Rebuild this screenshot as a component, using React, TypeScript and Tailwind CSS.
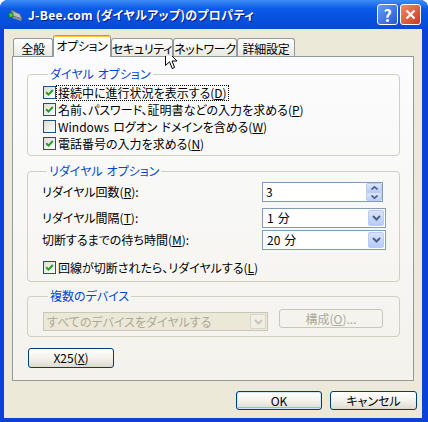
import React from "react";

const jp = "font-['Noto_Sans_CJK_JP','Noto_Sans',sans-serif] [font-feature-settings:'palt']";

function Box({ checked }: { checked: boolean }) {
  return (
    <span className="flex h-[13px] w-[13px] shrink-0 items-center justify-center border border-[#1c5180] bg-linear-to-br from-[#dcdcd7] to-white">
      {checked && (
        <svg width="9" height="9" viewBox="0 0 9 9">
          <path d="M1.2 4.2 L3.5 6.6 L7.8 2" stroke="#21a121" strokeWidth="2" fill="none" />
        </svg>
      )}
    </span>
  );
}

function CheckRow({ checked, focus, children }: { checked: boolean; focus?: boolean; children: React.ReactNode }) {
  return (
    <div className="flex h-[17px] items-center">
      <Box checked={checked} />
      <span
        className={
          focus
            ? "ml-[1px] whitespace-nowrap px-[1px] leading-[14px] outline outline-1 outline-dotted outline-black"
            : "ml-[1px] whitespace-nowrap px-[1px] leading-[14px]"
        }
      >
        {children}
      </span>
    </div>
  );
}

function Key({ k }: { k: string }) {
  return (
    <>
      (<span className="underline underline-offset-[1px]">{k}</span>)
    </>
  );
}

function Gap() {
  return <span className="inline-block w-[4px]" />;
}

function Chevron({ color = "#4d6185" }: { color?: string }) {
  return (
    <svg width="9" height="6" viewBox="0 0 9 6">
      <path d="M1 1 L4.5 4.5 L8 1" stroke={color} strokeWidth="2" fill="none" />
    </svg>
  );
}

function Combo({ num }: { num: string }) {
  return (
    <div className="flex h-[20px] w-[124px] items-center border border-[#7f9db9] bg-white">
      <span className="flex-1 pl-[4px] leading-[14px]">
        {num}
        <Gap />分
      </span>
      <span className="mr-[1px] flex h-[16px] w-[16px] items-center justify-center rounded-[2px] border border-[#b9cbf3] bg-linear-to-b from-[#d8e4fd] to-[#b7cbf8]">
        <Chevron />
      </span>
    </div>
  );
}

function Spin({ value }: { value: string }) {
  return (
    <div className="flex h-[20px] w-[121px] items-center border border-[#7f9db9] bg-white">
      <span className="flex-1 pl-[3px] leading-[14px]">{value}</span>
      <span className="flex h-[18px] w-[16px] flex-col">
        <span className="flex h-[9px] items-center justify-center rounded-t-[2px] border border-[#b9cbf3] bg-linear-to-b from-[#dbe6fd] to-[#bccef8]">
          <svg width="7" height="4" viewBox="0 0 7 4">
            <path d="M0.5 3.5 L3.5 0.8 L6.5 3.5" stroke="#4d6185" strokeWidth="1.6" fill="none" />
          </svg>
        </span>
        <span className="flex h-[9px] items-center justify-center rounded-b-[2px] border border-[#b9cbf3] bg-linear-to-b from-[#dbe6fd] to-[#bccef8]">
          <svg width="7" height="4" viewBox="0 0 7 4">
            <path d="M0.5 0.5 L3.5 3.2 L6.5 0.5" stroke="#4d6185" strokeWidth="1.6" fill="none" />
          </svg>
        </span>
      </span>
    </div>
  );
}

const btn =
  "flex items-center justify-center rounded-[3px] border border-[#003c74] bg-linear-to-b from-white via-[#f3f2ec] to-[#dedbce] leading-[14px] text-black";

const tab =
  "mb-[1px] flex h-[18px] items-center justify-center whitespace-nowrap rounded-t-[3px] border border-b-0 border-[#919b9c] bg-linear-to-b from-white to-[#e9e8e1] pt-[2px] tracking-[-0.3px]";

export default function App() {
  return (
    <div className={`relative flex h-[422px] w-[428px] flex-col overflow-hidden rounded-t-[8px] bg-[#0a42d8] text-[12px] text-black ${jp}`}>
      {/* title bar */}
      <div className="flex h-[29px] shrink-0 items-center bg-linear-to-b from-[#3d8df5] via-[#0a5ae8] via-30% to-[#0648d6] pl-[8px] pr-[7px]">
        <svg width="16" height="14" viewBox="0 0 16 14" className="mt-[1px]">
          <path d="M3 2 L12 6 L14 11 L5 8 Z" fill="#b8bdc4" stroke="#5c6470" strokeWidth="1" />
          <path d="M5 8 L14 11 L13 13 L4 10 Z" fill="#8a9099" />
          <rect x="1" y="5" width="4" height="4" fill="#3bd23b" stroke="#1a7a1a" strokeWidth="0.8" />
        </svg>
        <span className="ml-[4px] whitespace-nowrap text-[12px] font-bold tracking-[0.3px] text-white [text-shadow:1px_1px_0_#0a1883]">
          J-Bee.com (ダイヤルアップ)のプロパティ
        </span>
        <div className="ml-auto flex gap-[2px]">
          <span className="flex h-[21px] w-[21px] items-center justify-center rounded-[3px] border border-white bg-linear-to-br from-[#6a9bf7] to-[#2456d8] text-[16px] font-bold leading-none text-white">
            ?
          </span>
          <span className="flex h-[21px] w-[21px] items-center justify-center rounded-[3px] border border-white bg-linear-to-br from-[#ec8a66] to-[#c8391a]">
            <svg width="11" height="11" viewBox="0 0 11 11">
              <path d="M1.5 1.5 L9.5 9.5 M9.5 1.5 L1.5 9.5" stroke="white" strokeWidth="2.2" />
            </svg>
          </span>
        </div>
      </div>

      {/* body */}
      <div className="mb-[4px] ml-[4px] mr-[6px] flex flex-1 flex-col bg-[#ece9d8]">
        {/* tabs */}
        <div className="relative z-10 -mb-px flex h-[28px] items-end pl-[9px] pt-[6px]">
          <div className={`${tab} w-[40px]`}>全般</div>
          <div className="flex h-[22px] w-[58px] flex-col whitespace-nowrap rounded-t-[3px] border-x border-[#919b9c] bg-[#fcfcfe] tracking-[-0.3px]">
            <span className="h-[3px] rounded-t-[3px] border-t border-[#e68b2c] bg-[#ffc83c]" />
            <span className="flex flex-1 items-center justify-center pb-[2px]">オプション</span>
          </div>
          <div className={`${tab} w-[62px]`}>セキュリティ</div>
          <div className={`${tab} w-[64px]`}>ネットワーク</div>
          <div className={`${tab} w-[58px]`}>詳細設定</div>
        </div>

        {/* panel */}
        <div className="mx-[8px] h-[325px] border border-[#919b9c] bg-linear-to-b from-[#fcfcfe] to-[#f3f2ec] pl-[14px] pr-[13px] pt-[10px]">
          <fieldset className="rounded-[4px] border border-[#d0d0bf] pb-[3px] pl-[15px] pt-[3px]">
            <legend className="ml-[5px] px-[2px] leading-[14px] text-[#0046d5]">
              ダイヤル<Gap />オプション
            </legend>
            <CheckRow checked focus>
              接続中に進行状況を表示する<Key k="D" />
            </CheckRow>
            <CheckRow checked>
              名前、パスワード、証明書などの入力を求める<Key k="P" />
            </CheckRow>
            <CheckRow checked={false}>
              Windows<Gap />ログオン<Gap />ドメインを含める<Key k="W" />
            </CheckRow>
            <CheckRow checked>
              電話番号の入力を求める<Key k="N" />
            </CheckRow>
          </fieldset>

          <fieldset className="mt-[8px] rounded-[4px] border border-[#d0d0bf] pb-[5px] pl-[14px] pt-[4px]">
            <legend className="ml-[5px] px-[2px] leading-[14px] text-[#0046d5]">
              リダイヤル<Gap />オプション
            </legend>
            <div className="flex h-[20px] items-center">
              <span className="w-[220px] leading-[14px]">
                リダイヤル回数<Key k="R" />:
              </span>
              <Spin value="3" />
            </div>
            <div className="mt-[6px] flex h-[20px] items-center">
              <span className="w-[220px] leading-[14px]">
                リダイヤル間隔<Key k="T" />:
              </span>
              <Combo num="1" />
            </div>
            <div className="mt-[2px] flex h-[20px] items-center">
              <span className="w-[220px] leading-[14px]">
                切断するまでの待ち時間<Key k="M" />:
              </span>
              <Combo num="20" />
            </div>
            <div className="mt-[9px] pl-[1px]">
              <CheckRow checked>
                回線が切断されたら、リダイヤルする<Key k="L" />
              </CheckRow>
            </div>
          </fieldset>

          <fieldset className="mt-[7px] flex items-start rounded-[4px] border border-[#d0d0bf] pb-[5px] pl-[15px]">
            <legend className="ml-[5px] px-[2px] leading-[14px] text-[#0046d5]">複数のデバイス</legend>
            <div className="flex items-start">
              <div className="mt-[9px] flex h-[19px] w-[225px] items-center border border-[#c9c7ba] bg-[#ebe8d8] text-[#aca899]">
                <span className="flex-1 pl-[3px] leading-[14px]">すべてのデバイスをダイヤルする</span>
                <span className="mr-[1px] flex h-[15px] w-[16px] items-center justify-center border border-[#d8d6cb] bg-[#f0eee5]">
                  <Chevron color="#c9c7ba" />
                </span>
              </div>
              <div className="ml-[11px] mt-[6px] flex h-[19px] w-[104px] items-center justify-center rounded-[3px] border border-[#c9c7ba] bg-[#f4f3ee] leading-[14px] text-[#aca899]">
                構成(<span className="underline underline-offset-[1px]">O</span>)...
              </div>
            </div>
          </fieldset>

          <div className={`${btn} ml-[1px] mt-[11px] h-[20px] w-[86px]`}>
            X25<Key k="X" />
          </div>
        </div>

        {/* dialog buttons */}
        <div className="mt-[10px] flex justify-end gap-[8px] pr-[5px]">
          <div className={`${btn} h-[19px] w-[86px] shadow-[inset_0_0_0_1px_#cee7ff,inset_0_-1px_0_1px_#98b8ea]`}>OK</div>
          <div className={`${btn} h-[19px] w-[87px]`}>キャンセル</div>
        </div>
      </div>

      {/* mouse pointer */}
      <svg width="13" height="21" viewBox="0 0 13 21" className="absolute left-[165px] top-[49px]">
        <path d="M0.5 0.5 L0.5 16.5 L4.5 12.8 L7.2 19.5 L9.6 18.5 L7 12 L12 12 Z" fill="white" stroke="black" strokeWidth="1" strokeLinejoin="miter" />
      </svg>
    </div>
  );
}
